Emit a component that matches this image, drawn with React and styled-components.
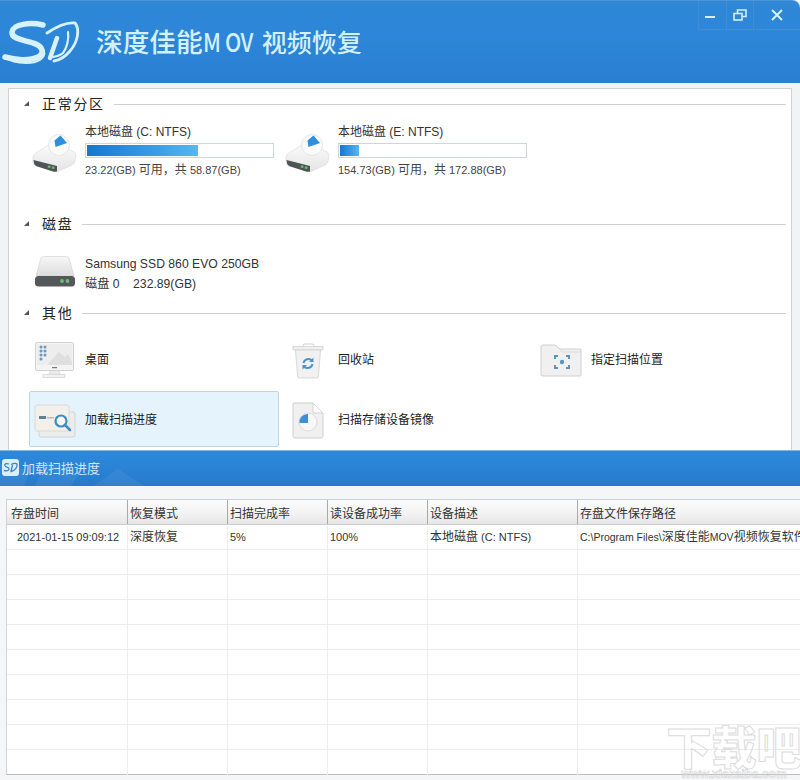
import React from "react";
import styled, { createGlobalStyle } from "styled-components";

const FONT = `"Liberation Sans", "Noto Sans CJK SC", sans-serif`;

const Global = createGlobalStyle`
  html, body { margin: 0; padding: 0; background: #fff; }
  * { box-sizing: border-box; }
`;

const Page = styled.div`
  position: relative;
  width: 800px;
  height: 780px;
  overflow: hidden;
  font-family: ${FONT};
  font-size: 12px;
  color: #222;
  background: #f4f6f7;
`;

const TitleBar = styled.header`
  height: 83px;
  display: flex;
  align-items: flex-start;
  background: linear-gradient(180deg, #2f87d6 0%, #2d86d9 45%, #2a7fd0 100%);
  border-top-right-radius: 8px;
  border-top: 1px solid #4d95d6;
`;

const LogoSlot = styled.div`
  width: 96px;
  height: 82px;
  flex: none;
`;

const AppTitle = styled.h1`
  margin: 22px 0 0;
  display: flex;
  align-items: baseline;
  font-size: 26.7px;
  line-height: 36px;
  font-weight: 500;
  color: #d4f0f8;
  white-space: pre;
  font-family: "Noto Sans CJK SC", sans-serif;
`;

const TitleLatin = styled.span`
  display: inline-block;
  width: 51px;
  margin-right: 8px;
  font-size: 26px;
  letter-spacing: -0.5px;
  transform: scaleX(0.83);
  transform-origin: left center;
`;

const TitleTail = styled.span`
  font-size: 25px;
`;

const Controls = styled.div`
  margin-left: auto;
  display: flex;
  height: 29px;
`;

const ControlButton = styled.div`
  width: ${(p) => p.$w}px;
  height: 29px;
  display: flex;
  align-items: center;
  justify-content: center;
  padding-right: ${(p) => p.$pr || 0}px;
  border-left: 1px solid #3d8ed4;
  border-bottom: 1px solid #3d8ed4;
`;

const Main = styled.main`
  height: 367px;
  padding: 5px 8px 0;
  background: #f1f4f5;
`;

const Panel = styled.section`
  height: 362px;
  background: #fff;
  border: 1px solid #d2d2d2;
  border-bottom: none;
  padding: 4px 5px 0 0;
  overflow: hidden;
`;

const SectionHead = styled.div`
  display: flex;
  align-items: center;
  height: 20px;
  margin-top: ${(p) => p.$top || 0}px;
`;

const Triangle = styled.span`
  width: 0;
  height: 0;
  margin-left: 15px;
  border-left: 5px solid transparent;
  border-bottom: 5px solid #555;
`;

const SectionName = styled.span`
  margin-left: 13px;
  font-size: 14px;
  letter-spacing: 1.7px;
  color: #222;
  white-space: nowrap;
`;

const Rule = styled.span`
  flex: 1;
  height: 1px;
  margin: 2px 0 0 9px;
  background: #cfcfcf;
`;

const ItemGrid = styled.div`
  display: grid;
  grid-template-columns: repeat(3, 250px);
  column-gap: 3px;
  row-gap: 4px;
  margin: ${(p) => p.$top}px 0 0 20px;
`;

const Item = styled.div`
  height: ${(p) => p.$h}px;
  display: flex;
  align-items: center;
  border: 1px solid ${(p) => (p.$active ? "#bcd4e6" : "transparent")};
  border-radius: 2px;
  background: ${(p) => (p.$active ? "#e5f3fd" : "transparent")};
`;

const IconSlot = styled.div`
  width: 55px;
  flex: none;
  display: flex;
  justify-content: center;
  padding-right: 6px;
  margin-top: ${(p) => p.$mt ?? 3}px;
`;

const ItemLabel = styled.span`
  margin-bottom: 1px;
  font-size: 12px;
  color: #1c1c1c;
  white-space: nowrap;
`;

const DriveText = styled.div`
  display: flex;
  flex-direction: column;
  width: 189px;
  padding-top: ${(p) => p.$pt || 0}px;
`;

const DriveName = styled.div`
  font-size: 12px;
  line-height: 14px;
  color: #333;
  white-space: nowrap;
`;

const Meter = styled.div`
  height: 15px;
  margin: 4px 0 5px;
  padding: 1px;
  border: 1px solid #cdd6da;
  background: #fff;
`;

const MeterFill = styled.div`
  height: 100%;
  background: linear-gradient(90deg, #1976cf 0%, #3b9be3 60%, #58b7ee 100%);
`;

const DriveMeta = styled.div`
  font-size: 11px;
  line-height: 14px;
  color: #444;
  white-space: pre;
`;

const Han = styled.span`
  font-size: 12px;
`;

const DiskLine = styled.div`
  font-size: 12.2px;
  line-height: 14px;
  margin-bottom: ${(p) => p.$mb || 0}px;
  color: #333;
  white-space: pre;
`;

const SubBar = styled.div`
  position: relative;
  height: 36px;
  display: flex;
  align-items: center;
  gap: 3px;
  padding: 0 0 2px 2px;
  overflow: hidden;
  background: linear-gradient(180deg, #2e88d9 0%, #2a83d6 50%, #2679cb 100%);
  border-top: 1px solid #86b6d6;
`;

const SubBarDecor = styled.svg`
  position: absolute;
  left: 0;
  top: 0;
`;

const SubIcon = styled.div`
  position: relative;
  width: 17px;
  height: 17px;
  border-radius: 3px;
  background: #dceef8;
  display: flex;
  align-items: center;
  justify-content: center;
`;

const SubTitle = styled.span`
  position: relative;
  font-size: 13px;
  color: #cfe8f8;
`;

const TableArea = styled.div`
  height: 294px;
  padding: 13px 0 0 6px;
`;

const Table = styled.div`
  height: 276px;
  background: #fff;
  border-top: 1px solid #cfcfcf;
  border-left: 1px solid #d4d4d4;
  border-bottom: 1px solid #bdbdbd;
`;

const HeaderRow = styled.div`
  display: flex;
  height: 25px;
  background: linear-gradient(180deg, #fbfbfb 0%, #f4f4f4 50%, #e6e6e6 100%);
  border-bottom: 1px solid #cfcfcf;
`;

const HeaderCell = styled.div`
  width: ${(p) => p.$w}px;
  flex: none;
  display: flex;
  align-items: center;
  padding-left: 4px;
  font-size: 12px;
  color: #333;
  white-space: nowrap;
  &:not(:first-child) {
    padding-left: 2px;
    border-left: 1px solid #a9a9a9;
  }
`;

const Row = styled.div`
  display: flex;
  height: 25px;
  border-bottom: 1px solid #ececec;
  &:last-child { border-bottom: none; }
`;

const Cell = styled.div`
  width: ${(p) => p.$w}px;
  flex: none;
  display: block;
  line-height: 24px;
  padding-left: ${(p) => p.$pl}px;
  font-size: ${(p) => p.$fs || 11}px;
  color: #333;
  white-space: pre;
  overflow: hidden;
  &:not(:first-child) { border-left: 1px solid #eeeeee; }
`;

const Watermark = styled.div`
  position: absolute;
  right: -3px;
  bottom: 0;
  width: 138px;
  pointer-events: none;
  display: flex;
  flex-direction: column;
  align-items: center;
  color: transparent;
`;

const WatermarkMain = styled.div`
  font-size: 45px;
  line-height: 44px;
  font-weight: 900;
  font-family: "Noto Sans CJK SC", sans-serif;
  white-space: nowrap;
  -webkit-text-stroke: 1px #dcdcdc;
`;

const WatermarkSub = styled.div`
  margin-top: 1px;
  font-size: 12px;
  line-height: 11px;
  font-weight: 700;
  white-space: nowrap;
  -webkit-text-stroke: 0.6px #d4d4d4;
`;

const Logo = () => (
  <svg width="96" height="82" viewBox="0 0 96 82" fill="none">
    <g stroke="#d6f3fb" strokeLinecap="round" strokeLinejoin="round">
      <path d="M43 24 C30 21 13 23 12 31 C11 38 24 39 33 42 C43 45 45 52 38 56 C30 60 15 59 5 56" strokeWidth="5.500" />
      <path d="M20 38 C28 41 41 43 44 50 C46 57 38 62 26 62 C18 62 10 60 5 56" strokeWidth="2" />
      <path d="M47 32 C56 26 67 21 75 22 C80 28 78 41 70 50 C65 56 60 59 54 60" strokeWidth="2.800" />
      <path d="M57 37 L50 57" strokeWidth="4.500" />
      <path d="M53 56 C58 55 61 54 63 52 C67 47 69 38 68 31" strokeWidth="2.200" />
    </g>
  </svg>
);

const DriveIcon = () => (
  <svg width="46" height="40" viewBox="0 0 46 40">
    <defs>
      <linearGradient id="dtop" x1="0" y1="0" x2="0" y2="1">
        <stop offset="0" stopColor="#fbfbfb" />
        <stop offset="1" stopColor="#e4e4e4" />
      </linearGradient>
    </defs>
    <path d="M1 24 Q1 22 4 20 L15 13 Q17 12 20 12 L38 17 Q44 19 44 22 L43 28 Q43 30 40 32 L27 38 Q24 39 21 38 L4 33 Q0 31 1 24 Z" fill="url(#dtop)" stroke="#d8d8d8" strokeWidth=".6" />
    <path d="M1.500 27 L25 33 V38.500 Q23 39 21 38.500 L4 33 Q1.500 31 1.500 27 Z" fill="#505455" />
    <rect x="16" y="32.500" width="2.600" height="2.200" fill="#63c06f" transform="rotate(15 17 33)" />
    <rect x="20" y="33.500" width="2.600" height="2.200" fill="#63c06f" transform="rotate(15 21 34)" />
    <circle cx="27" cy="12" r="10.500" fill="#fbfbfb" stroke="#e6e6e6" />
    <path d="M28.500 2.500 L35 10 L23.500 14 L22.500 7.500 Z" fill="#2f8fdc" />
  </svg>
);

const SsdIcon = () => (
  <svg width="42" height="32" viewBox="0 0 42 32">
    <defs>
      <linearGradient id="ssd" x1="0" y1="0" x2="0" y2="1">
        <stop offset="0" stopColor="#f7f7f7" />
        <stop offset="1" stopColor="#dcdcdc" />
      </linearGradient>
    </defs>
    <path d="M7 2 Q8 .5 11 .5 H31 Q34 .5 35 2 L40 20 H2 Z" fill="url(#ssd)" stroke="#d0d0d0" strokeWidth=".6" />
    <rect x="1" y="20" width="40" height="10.500" rx="3.500" fill="#54585a" />
    <circle cx="28" cy="25" r="1.900" fill="#66c172" />
    <circle cx="33.500" cy="25" r="1.900" fill="#66c172" />
  </svg>
);

const DesktopIcon = () => (
  <svg width="40" height="37" viewBox="0 0 40 37">
    <rect x=".5" y=".5" width="38" height="28" rx="1.500" fill="#f4f4f4" stroke="#d2d2d2" />
    <rect x="2" y="2" width="35" height="21" fill="#ededed" />
    <path d="M12 23 L24 10 L30 15 L33 12 L37 20 V23 Z" fill="#dfdfdf" />
    <g fill="#6d97bb">
      <circle cx="6" cy="5" r="1.500" /><circle cx="10" cy="5" r="1.500" />
      <circle cx="6" cy="9" r="1.500" /><circle cx="10" cy="9" r="1.500" />
      <circle cx="6" cy="13" r="1.500" /><circle cx="10" cy="13" r="1.500" />
      <circle cx="6" cy="17" r="1.500" />
    </g>
    <rect x="17" y="25" width="5" height="1.200" fill="#777" />
    <path d="M15 29 H24 L25 32 H14 Z" fill="#eee" stroke="#d4d4d4" strokeWidth=".6" />
    <rect x="8" y="32.500" width="22" height="3" fill="#f2f2f2" stroke="#d2d2d2" strokeWidth=".7" />
  </svg>
);

const TrashIcon = () => (
  <svg width="32" height="36" viewBox="0 0 32 36">
    <path d="M11 3 Q11 1 13 1 H20 Q22 1 22 3" fill="none" stroke="#cfcfcf" />
    <rect x="1" y="3.500" width="30" height="3.500" fill="#efefef" stroke="#cdcdcd" strokeWidth=".7" />
    <path d="M3.500 7 H28.500 L26.500 33 Q26.400 35 24 35 H8 Q5.600 35 5.500 33 Z" fill="#f1f1f1" stroke="#d0d0d0" strokeWidth=".8" />
    <g fill="none" stroke="#4e93c7" strokeWidth="2">
      <path d="M11.500 20 A5 5 0 0 1 20 17.500" />
      <path d="M20.500 21 A5 5 0 0 1 12 23.500" />
    </g>
    <path d="M21.500 14.500 V19 H17 Z M10.500 26.500 V22 H15 Z" fill="#4e93c7" />
  </svg>
);

const FolderIcon = () => (
  <svg width="42" height="33" viewBox="0 0 42 33">
    <path d="M1 3 Q1 1 3 1 H15 L20 5 H40 Q41 5 41 6 V31 Q41 32 40 32 H3 Q1 32 1 30 Z" fill="#f0f0f0" stroke="#cfcfcf" />
    <path d="M20 5 L22 8 H41" fill="none" stroke="#dcdcdc" />
    <path d="M15 15 V12 H18 M26 12 H29 V15 M15 21 V24 H18 M29 21 V24 H26" fill="none" stroke="#5b94bf" strokeWidth="2" />
    <circle cx="22" cy="18" r="2.200" fill="#5b94bf" />
  </svg>
);

const LoadIcon = () => (
  <svg width="42" height="34" viewBox="0 0 42 34">
    <rect x="5" y="8" width="36" height="25" rx="2" fill="#ececec" stroke="#d4d4d4" />
    <rect x="1" y="1" width="34" height="26" rx="2" fill="#f3efe9" stroke="#dadada" />
    <rect x="5" y="12" width="7" height="3" fill="#5f7f9c" />
    <rect x="13" y="13" width="7" height="1.500" fill="#bbb" />
    <circle cx="27" cy="17" r="5.500" fill="#f8f8f8" stroke="#3d8fc1" strokeWidth="2.200" />
    <path d="M31 21 L36 26" stroke="#3d8fc1" strokeWidth="2.600" strokeLinecap="round" />
  </svg>
);

const ImageIcon = () => (
  <svg width="32" height="37" viewBox="0 0 32 37">
    <path d="M2 1 H21 L31 11 V34 Q31 36 29 36 H3 Q1 36 1 34 V2 Q1 1 2 1 Z" fill="#f0f0f0" stroke="#cfcfcf" />
    <path d="M21 1 V11 H31 Z" fill="#fafafa" stroke="#d6d6d6" />
    <circle cx="16" cy="20" r="9" fill="#f7f7f7" stroke="#dcdcdc" />
    <path d="M16 12 A8 8 0 0 0 7.500 21 L16 21 Z" fill="#3f8fd6" />
  </svg>
);

const SubLogo = () => (
  <svg width="15" height="11" viewBox="0 0 15 11" fill="none" stroke="#3a86c4" strokeWidth="1.300">
    <path d="M6 2 C3 1 1 2 2 4 C3 5.500 6 5 6 7 C6 9 3 9 1 8.500" />
    <path d="M8 2.500 C10 1.500 13 1 14 2 C14.500 5 12 9 8 9.500 L9.500 3" />
  </svg>
);

const mixed = (text) =>
  text.split(/([\u4e00-\u9fff，]+)/).map((part, i) =>
    i % 2 ? <Han key={i}>{part}</Han> : part
  );

const columns = [120, 100, 100, 100, 150, 223];
const headers = ["存盘时间", "恢复模式", "扫描完成率", "读设备成功率", "设备描述", "存盘文件保存路径"];
const record = [
  "2021-01-15 09:09:12",
  "深度恢复",
  "5%",
  "100%",
  "本地磁盘 (C: NTFS)",
  "C:\\Program Files\\深度佳能MOV视频恢复软件",
];

export default function App() {
  return (
    <Page>
      <Global />
      <TitleBar>
        <LogoSlot><Logo /></LogoSlot>
        <AppTitle>
          深度佳能<TitleLatin>M OV</TitleLatin><TitleTail>视频恢复</TitleTail>
        </AppTitle>
        <Controls>
          <ControlButton $w={28} $pr={5}>
            <svg width="12" height="12" viewBox="0 0 12 12"><rect x="1" y="7" width="10" height="2" fill="#d4f0f8" /></svg>
          </ControlButton>
          <ControlButton $w={27}>
            <svg width="14" height="12" viewBox="0 0 14 12" fill="none" stroke="#d4f0f8" strokeWidth="1.600">
              <rect x="1" y="4.500" width="8" height="6.500" />
              <path d="M4.500 4 V1 H13 V7.500 H9.500" />
            </svg>
          </ControlButton>
          <ControlButton $w={47}>
            <svg width="12" height="12" viewBox="0 0 12 12" stroke="#d4f0f8" strokeWidth="2">
              <path d="M1 1 L11 11 M11 1 L1 11" />
            </svg>
          </ControlButton>
        </Controls>
      </TitleBar>

      <Main>
        <Panel>
          <SectionHead>
            <Triangle />
            <SectionName>正常分区</SectionName>
            <Rule />
          </SectionHead>
          <ItemGrid $top={9}>
            <Item $h={56}>
              <IconSlot $mt={6}><DriveIcon /></IconSlot>
              <DriveText $pt={2}>
                <DriveName>本地磁盘 (C: NTFS)</DriveName>
                <Meter><MeterFill style={{ width: "60%" }} /></Meter>
                <DriveMeta>{mixed("23.22(GB) 可用，共 58.87(GB)")}</DriveMeta>
              </DriveText>
            </Item>
            <Item $h={56}>
              <IconSlot $mt={6}><DriveIcon /></IconSlot>
              <DriveText $pt={2}>
                <DriveName>本地磁盘 (E: NTFS)</DriveName>
                <Meter><MeterFill style={{ width: "10.5%" }} /></Meter>
                <DriveMeta>{mixed("154.73(GB) 可用，共 172.88(GB)")}</DriveMeta>
              </DriveText>
            </Item>
          </ItemGrid>

          <SectionHead $top={35}>
            <Triangle />
            <SectionName>磁盘</SectionName>
            <Rule />
          </SectionHead>
          <ItemGrid $top={16}>
            <Item $h={42}>
              <IconSlot $mt={4}><SsdIcon /></IconSlot>
              <DriveText $pt={7}>
                <DiskLine $mb={6}>Samsung SSD 860 EVO 250GB</DiskLine>
                <DiskLine>{"磁盘 0    232.89(GB)"}</DiskLine>
              </DriveText>
            </Item>
          </ItemGrid>

          <SectionHead $top={11}>
            <Triangle />
            <SectionName>其他</SectionName>
            <Rule />
          </SectionHead>
          <ItemGrid $top={9}>
            <Item $h={56}>
              <IconSlot><DesktopIcon /></IconSlot>
              <ItemLabel>桌面</ItemLabel>
            </Item>
            <Item $h={56}>
              <IconSlot><TrashIcon /></IconSlot>
              <ItemLabel>回收站</ItemLabel>
            </Item>
            <Item $h={56}>
              <IconSlot><FolderIcon /></IconSlot>
              <ItemLabel>指定扫描位置</ItemLabel>
            </Item>
            <Item $h={56} $active>
              <IconSlot><LoadIcon /></IconSlot>
              <ItemLabel>加载扫描进度</ItemLabel>
            </Item>
            <Item $h={56}>
              <IconSlot><ImageIcon /></IconSlot>
              <ItemLabel>扫描存储设备镜像</ItemLabel>
            </Item>
          </ItemGrid>
        </Panel>
      </Main>

      <SubBar>
        <SubBarDecor width="160" height="36" viewBox="0 0 160 36">
          <path d="M0 12 L30 20 L24 36 H0 Z M34 36 L48 10 L78 24 L70 36 Z M92 36 L118 18 L146 36 Z" fill="#fff" opacity=".06" />
        </SubBarDecor>
        <SubIcon><SubLogo /></SubIcon>
        <SubTitle>加载扫描进度</SubTitle>
      </SubBar>

      <TableArea>
        <Table>
          <HeaderRow>
            {headers.map((h, i) => (
              <HeaderCell key={h} $w={columns[i]}>{h}</HeaderCell>
            ))}
          </HeaderRow>
          {Array.from({ length: 10 }, (_, r) => (
            <Row key={r}>
              {columns.map((w, c) => (
                <Cell key={c} $w={w} $pl={c === 0 ? 10 : 2} $fs={c === 5 ? 10.5 : 11}>
                  {r === 0 ? mixed(record[c]) : ""}
                </Cell>
              ))}
            </Row>
          ))}
        </Table>
      </TableArea>

      <Watermark>
        <WatermarkMain>下载吧</WatermarkMain>
        <WatermarkSub>www.xiazaiba.com</WatermarkSub>
      </Watermark>
    </Page>
  );
}
